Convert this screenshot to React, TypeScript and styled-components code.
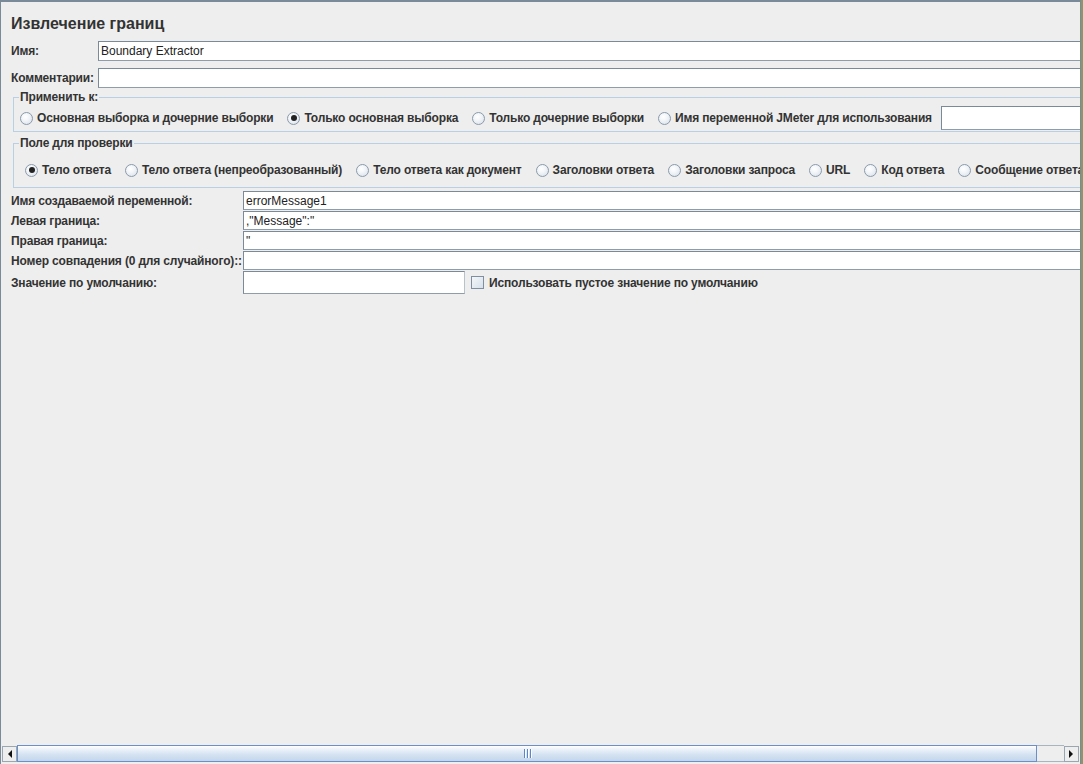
import styled, { createGlobalStyle } from 'styled-components'

const GlobalStyle = createGlobalStyle`
    html, body {
        margin: 0;
        padding: 0;
        background: #eeeeee;
    }
    * {
        box-sizing: border-box;
    }
`

const Window = styled.div`
    width: 1083px;
    height: 764px;
    background: #8d9764;
    padding-right: 2px;
    font-family: 'Liberation Sans', Arial, sans-serif;
    font-size: 12px;
    color: #333333;
`

const Frame = styled.div`
    height: 100%;
    display: flex;
    flex-direction: column;
    background: #eeeeee;
    border-top: 2px solid #7a8a99;
    border-left: 1px solid #7a8a99;
    border-right: 1px solid #7a8a99;
    overflow: hidden;
`

const Content = styled.div`
    flex: 1;
    overflow: hidden;
    padding: 12px 0 0 10px;
`

const Inner = styled.div`
    width: 1140px;
`

const Title = styled.div`
    font-size: 16px;
    font-weight: bold;
    line-height: 20px;
    color: #333333;
    margin-bottom: 7px;
`

const FieldRow = styled.div<{ $gap?: number }>`
    display: flex;
    align-items: center;
    height: 20px;
    margin-bottom: ${(p) => p.$gap ?? 0}px;
`

const Label = styled.label<{ $width: number }>`
    flex: 0 0 ${(p) => p.$width}px;
    font-weight: bold;
    letter-spacing: -0.16px;
    white-space: nowrap;
    color: #333333;
`

const TextInput = styled.div<{ $width?: number; $height?: number }>`
    flex: ${(p) => (p.$width ? `0 0 ${p.$width}px` : '1')};
    height: ${(p) => p.$height ?? 20}px;
    background: #ffffff;
    border-top: 1px solid #7a8a99;
    border-left: 1px solid #7a8a99;
    border-bottom: 1px solid #8f9dab;
    border-right: 1px solid #b7c2cc;
    padding: 0 2px;
    display: flex;
    align-items: center;
    font-size: 12px;
    color: #222222;
    white-space: nowrap;
    overflow: hidden;
`

const VarNameInput = styled(TextInput)`
    margin-left: -5px;
`

const Group = styled.fieldset<{ $top: number; $padTop: number; $padBottom: number }>`
    margin: ${(p) => p.$top}px 0 0 2px;
    padding: ${(p) => p.$padTop}px 5px ${(p) => p.$padBottom}px 5px;
    border: 1px solid #b8cfe5;
    min-width: 0;
`

const Legend = styled.legend`
    padding: 0 1px;
    font-weight: bold;
    letter-spacing: -0.16px;
    line-height: 14px;
    color: #333333;
`

const RadioRow = styled.div<{ $indent: number; $height: number }>`
    display: flex;
    align-items: center;
    gap: 14px;
    height: ${(p) => p.$height}px;
    padding-left: ${(p) => p.$indent}px;
    white-space: nowrap;
`

const RadioItem = styled.label`
    display: flex;
    align-items: center;
    gap: 4px;
    font-weight: bold;
    letter-spacing: -0.16px;
    color: #333333;
`

const RadioDot = styled.span<{ $on?: boolean }>`
    position: relative;
    flex: 0 0 13px;
    width: 13px;
    height: 13px;
    border-radius: 50%;
    border: 1px solid #8b9aaa;
    background: radial-gradient(circle at 40% 35%, #ffffff 0%, #f2f5f8 40%, #d3dde7 100%);

    &::after {
        content: '';
        display: ${(p) => (p.$on ? 'block' : 'none')};
        position: absolute;
        left: 2.5px;
        top: 2.5px;
        width: 6px;
        height: 6px;
        border-radius: 50%;
        background: #222222;
    }
`

const Form = styled.div`
    margin-top: 3px;
    display: flex;
    flex-direction: column;
`

const GridRow = styled.div<{ $height: number; $gap: number }>`
    display: flex;
    align-items: center;
    height: ${(p) => p.$height}px;
    margin-bottom: ${(p) => p.$gap}px;
`

const CheckBox = styled.span`
    flex: 0 0 13px;
    width: 13px;
    height: 13px;
    margin-left: 6px;
    border: 1px solid #7f8f9f;
    background: linear-gradient(135deg, #f4f7fa 0%, #d6e0ea 100%);
`

const CheckLabel = styled.span`
    margin-left: 5px;
    font-weight: bold;
    letter-spacing: -0.16px;
    color: #333333;
    white-space: nowrap;
`

const ScrollBar = styled.div`
    display: flex;
    height: 17px;
    margin: 0 1px 2px 1px;
`

const ArrowButton = styled.div`
    flex: 0 0 15px;
    height: 16px;
    margin-top: 1px;
    border: 1px solid #9aa6b2;
    background: #eeeeee;
    display: flex;
    align-items: center;
    justify-content: center;
`

const Thumb = styled.div`
    flex: 0 0 1020px;
    height: 17px;
    border: 1px solid #6d8fc9;
    background: linear-gradient(#ffffff 0%, #eaf1f9 25%, #d6e4f2 55%, #c3d6eb 100%);
    display: flex;
    align-items: center;
    justify-content: center;
`

const Grip = styled.span`
    width: 1px;
    height: 9px;
    margin: 0 1px;
    background: #5b86c9;
    box-shadow: 1px 0 0 #ffffff;
`

const TrackRest = styled.div`
    flex: 1;
    height: 17px;
    border-top: 1px solid #a8b4c0;
    border-bottom: 1px solid #a8b4c0;
    background: #eeeeee;
`

const Arrow = ({ dir }: { dir: 'left' | 'right' }) => (
    <svg width="5" height="8" viewBox="0 0 5 8">
        {dir === 'left' ? (
            <polygon points="5,0 5,8 1,4" fill="#111111" />
        ) : (
            <polygon points="0,0 0,8 4,4" fill="#111111" />
        )}
    </svg>
)

const applyOptions = [
    { label: 'Основная выборка и дочерние выборки', on: false },
    { label: 'Только основная выборка', on: true },
    { label: 'Только дочерние выборки', on: false },
    { label: 'Имя переменной JMeter для использования', on: false },
]

const fieldOptions = [
    { label: 'Тело ответа', on: true },
    { label: 'Тело ответа (непреобразованный)', on: false },
    { label: 'Тело ответа как документ', on: false },
    { label: 'Заголовки ответа', on: false },
    { label: 'Заголовки запроса', on: false },
    { label: 'URL', on: false },
    { label: 'Код ответа', on: false },
    { label: 'Сообщение ответа', on: false },
]

const params = [
    { label: 'Имя создаваемой переменной:', value: 'errorMessage1' },
    { label: 'Левая граница:', value: ',"Message":"' },
    { label: 'Правая граница:', value: '"' },
    { label: 'Номер совпадения (0 для случайного)::', value: '' },
]

export default function App() {
    return (
        <Window>
            <GlobalStyle />
            <Frame>
                <Content>
                    <Inner>
                        <Title>Извлечение границ</Title>

                        <FieldRow $gap={7}>
                            <Label $width={87}>Имя:</Label>
                            <TextInput>Boundary Extractor</TextInput>
                        </FieldRow>
                        <FieldRow>
                            <Label $width={87}>Комментарии:</Label>
                            <TextInput />
                        </FieldRow>

                        <Group $top={2} $padTop={2} $padBottom={1}>
                            <Legend>Применить к:</Legend>
                            <RadioRow $indent={1} $height={24}>
                                {applyOptions.map((o) => (
                                    <RadioItem key={o.label}>
                                        <RadioDot $on={o.on} />
                                        {o.label}
                                    </RadioItem>
                                ))}
                                <VarNameInput $width={200} $height={24} />
                            </RadioRow>
                        </Group>

                        <Group $top={4} $padTop={10} $padBottom={7}>
                            <Legend>Поле для проверки</Legend>
                            <RadioRow $indent={6} $height={20}>
                                {fieldOptions.map((o) => (
                                    <RadioItem key={o.label}>
                                        <RadioDot $on={o.on} />
                                        {o.label}
                                    </RadioItem>
                                ))}
                            </RadioRow>
                        </Group>

                        <Form>
                            {params.map((p) => (
                                <GridRow key={p.label} $height={19} $gap={1}>
                                    <Label $width={232}>{p.label}</Label>
                                    <TextInput $height={19}>{p.value}</TextInput>
                                </GridRow>
                            ))}
                            <GridRow $height={23} $gap={0}>
                                <Label $width={232}>Значение по умолчанию:</Label>
                                <TextInput $width={222} $height={23} />
                                <CheckBox />
                                <CheckLabel>Использовать пустое значение по умолчанию</CheckLabel>
                            </GridRow>
                        </Form>
                    </Inner>
                </Content>

                <ScrollBar>
                    <ArrowButton>
                        <Arrow dir="left" />
                    </ArrowButton>
                    <Thumb>
                        <Grip />
                        <Grip />
                        <Grip />
                    </Thumb>
                    <TrackRest />
                    <ArrowButton>
                        <Arrow dir="right" />
                    </ArrowButton>
                </ScrollBar>
            </Frame>
        </Window>
    )
}
